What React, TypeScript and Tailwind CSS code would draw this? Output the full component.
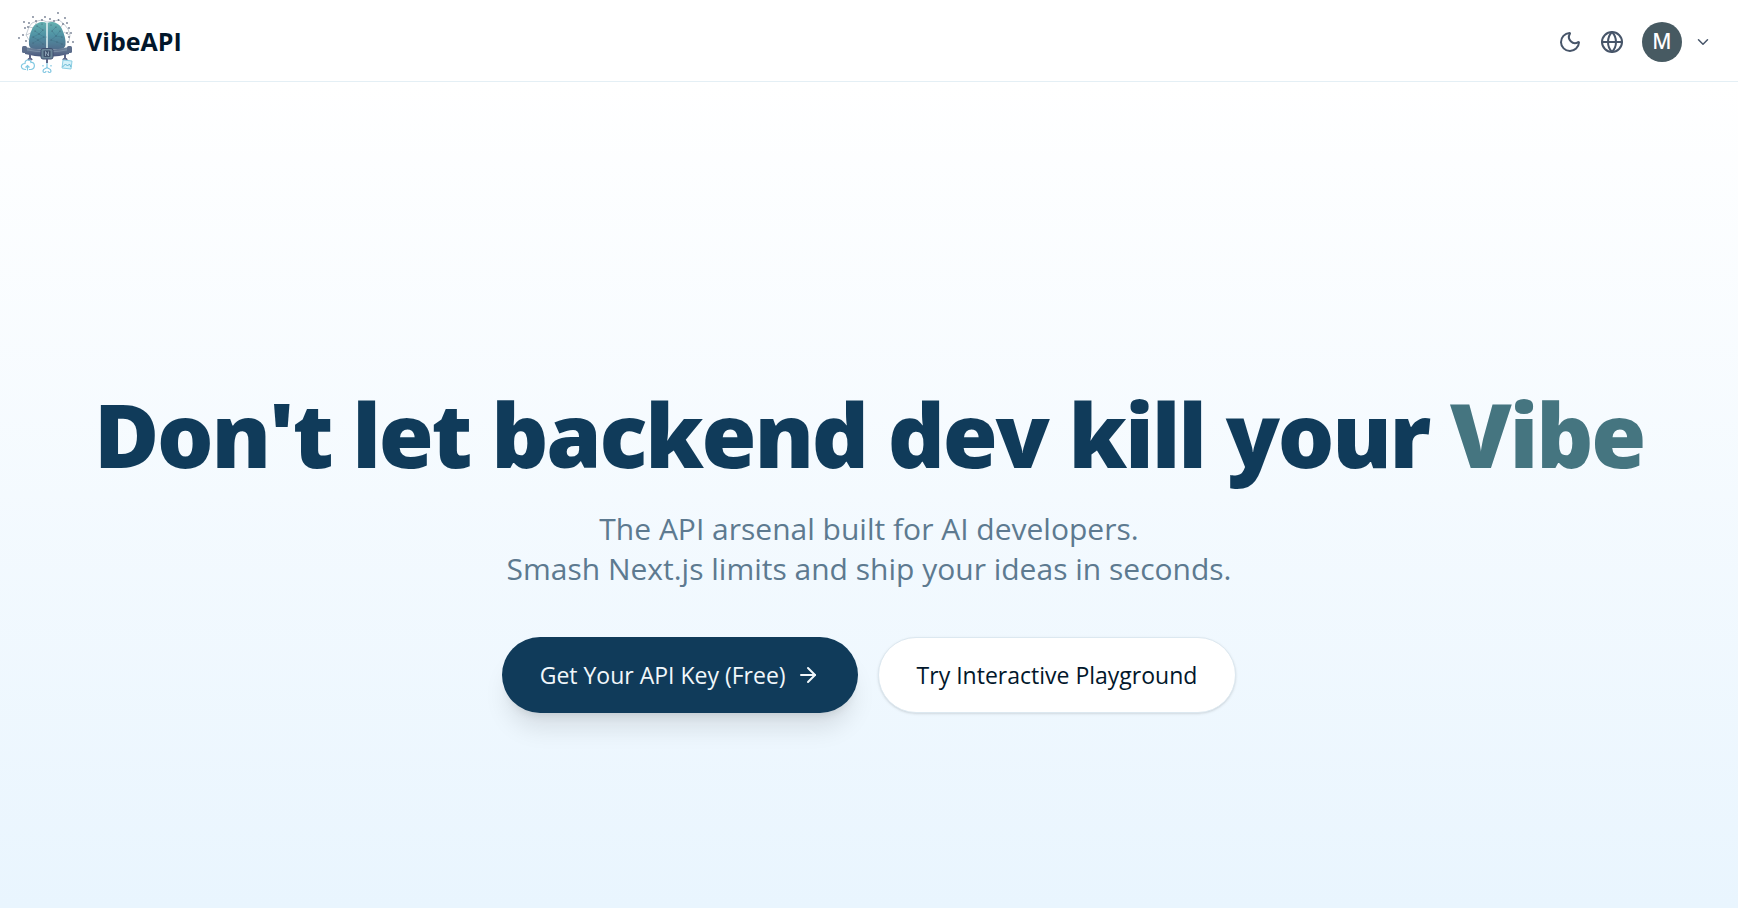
import { ArrowRight, ChevronDown, Globe, Moon } from "lucide-react";

const sparks = [
  [40, 4], [15, 8], [27, 8], [47, 9], [40.5, 11], [6, 13], [49, 14], [18, 12],
  [7, 19], [51, 19], [1, 29], [49, 24], [51, 28], [53, 24], [50, 33], [55, 33],
  [10, 18], [24, 11], [5, 26], [45, 15], [8, 32], [11, 14], [32, 10], [36, 12],
];

const dots = [
  [19, 17], [24, 15], [25, 21], [17, 22], [21, 25], [26, 28], [15, 28], [20, 31],
  [25, 35], [15, 34], [33, 16], [38, 18], [34, 22], [42, 22], [38, 27], [44, 28],
  [33, 31], [39, 33], [44, 35], [28.5, 28],
];

function Logo() {
  return (
    <svg viewBox="0 1 56 64" className="h-16 w-14 shrink-0" fill="none" aria-hidden="true">
      <defs>
        <linearGradient id="brain" x1="0" y1="0" x2="0" y2="1">
          <stop offset="0" stopColor="#64b0b0" />
          <stop offset="0.5" stopColor="#5092a4" />
          <stop offset="1" stopColor="#506e8c" />
        </linearGradient>
        <linearGradient id="belt" x1="0" y1="0" x2="0" y2="1">
          <stop offset="0" stopColor="#74899f" />
          <stop offset="1" stopColor="#46547a" />
        </linearGradient>
      </defs>
      <path
        d="M11 31 8 26l3-8 3-4 5-2 5-1 5 2 7-1 5-1 5 4 4 5 2 6-1 6M11 18l5 1 3-7M45 15l-3 4M8 26l5-2M51 26l-5-3"
        stroke="#8d9ba8"
        strokeWidth="0.5"
      />
      {sparks.map(([x, y]) => (
        <circle key={`${x}-${y}`} cx={x} cy={y} r="0.9" fill="#727d8f" />
      ))}
      <path d="M28.500 14C25 12 18 13 14.500 19 11.500 25 10.500 31 11 36c.5 2 2 4 4 4h13.500z" fill="url(#brain)" />
      <path d="M29.500 14C33 12 40 13 43.500 19 46.500 25 48 31 47.500 36c-.5 2-2 4-4 4h-14z" fill="url(#brain)" />
      <path
        d="m19 17 6 4-4 4 5 3-6 3 5 4M17 22l4 3-6 3 5 3-5 3M38 18l-4 4 4 5 4-5M44 28l-6-1-5 4 6 2 5 2"
        stroke="#3a7085"
        strokeWidth="0.6"
        opacity="0.6"
      />
      {dots.map(([x, y]) => (
        <circle key={`${x}-${y}`} cx={x} cy={y} r="0.6" fill="#3f5c72" />
      ))}
      <path d="M29 13v27" stroke="#d3e9ec" strokeWidth="1.2" />
      <path d="M7 38q22 5 44 0v7q-22 6-44 0z" fill="url(#belt)" />
      <path d="M7 40.500q22 5 44 0" stroke="#8a9db2" strokeWidth="0.6" />
      <rect x="4" y="37" width="5" height="7" rx="1.5" fill="#5c6d8b" />
      <rect x="49" y="37" width="5" height="7" rx="1.5" fill="#5c6d8b" />
      <rect x="23" y="39.500" width="12" height="10.5" rx="2" fill="#6b8699" stroke="#405070" />
      <rect x="25.500" y="41.500" width="7" height="6.500" rx="1" fill="#40516c" />
      <path d="M27.500 47v-4.500l3 4.500v-4.500" stroke="#9db2c3" strokeWidth="0.8" />
      <path d="M12 45v4m-2 2q2-3 4 0M29 50v4M47 45v4m-2 2q2-3 4 0" stroke="#5d6587" strokeWidth="2" />
      <path
        d="M8 60.500c-6 0-6-6-1-6 0-5 6-4 6-1 4-1 5 6 0 7h-2M9.500 61.500v-5m-2 2 2-2 2 2"
        stroke="#82c9e2"
        strokeWidth="1.2"
      />
      <path
        d="M29 54v4c0 2-4 1-4 4 0 2 3 2 3 0M29 58c0 2 4 1 4 4 0 2-3 2-3 0M25 57.500V56M33 57.500V56"
        stroke="#7cc4e0"
        strokeWidth="1.2"
      />
      <path d="m45 51 9 1-1 8-9-1z" fill="#d4f1f9" stroke="#8bcfe4" />
      <path d="m44.500 58 3-3 2 2 2-2 1.500 3" stroke="#63b4d0" />
    </svg>
  );
}

export default function App() {
  return (
    <div className="flex min-h-screen flex-col bg-white font-['Open_Sans',sans-serif] text-[#02172b]">
      <header className="flex items-center justify-between border-b border-[#e4eff5] bg-white px-[18px] pt-2.5 pb-[7px]">
        <a href="#" className="flex items-center gap-3 text-[25px] font-bold">
          <Logo />
          VibeAPI
        </a>
        <div className="flex items-center gap-[18px] pr-2 text-[#475569]">
          <button type="button" aria-label="Toggle theme"><Moon size={24} strokeWidth={2} /></button>
          <button type="button" aria-label="Language"><Globe size={24} strokeWidth={2} /></button>
          <button type="button" aria-label="Account menu" className="flex items-center gap-3">
            <span className="flex size-10 items-center justify-center rounded-full bg-[#475a62] font-['Noto_Sans',sans-serif] text-[21px] font-medium text-white">M</span>
            <ChevronDown size={18} strokeWidth={2} />
          </button>
        </div>
      </header>
      <main className="flex grow flex-col items-center justify-center bg-linear-to-b from-white to-[#e9f5fe] px-6 pt-28 text-center">
        <h1 className="text-[89px] leading-[90px] font-extrabold tracking-tight text-[#103b5a]">
          Don't let backend dev kill your <span className="text-[#457580]">Vibe</span>
        </h1>
        <p className="mt-[30px] text-[30px] leading-10 text-[#5d7a90]">
          The API arsenal built for AI developers.
          <br />
          Smash Next.js limits and ship your ideas in seconds.
        </p>
        <div className="mt-12 flex flex-wrap justify-center gap-5 text-[23px] font-medium">
          <a href="#" className="flex h-[76px] items-center gap-2.5 rounded-full bg-[#103b5a] px-[38px] text-[#f1f7fb] shadow-xl">
            Get Your API Key (Free)
            <ArrowRight size={24} strokeWidth={2} />
          </a>
          <a href="#" className="flex h-[76px] items-center rounded-full border border-[#dce8f0] bg-white px-[38px] shadow-sm">
            Try Interactive Playground
          </a>
        </div>
      </main>
    </div>
  );
}
